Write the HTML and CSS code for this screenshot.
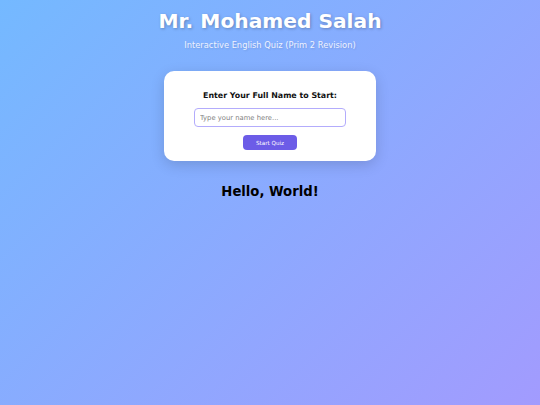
FILE: index.html
```html
<!DOCTYPE html>
<html>
<head>
<meta charset="utf-8">
<link rel="stylesheet" href="styles.css">
</head>
<body>
<header class="header">
  <h1 class="title">Mr. Mohamed Salah</h1>
  <p class="subtitle">Interactive English Quiz (Prim 2 Revision)</p>
</header>
<main class="main">
  <div class="card">
    <h3 class="card-title">Enter Your Full Name to Start:</h3>
    <input class="name-input" type="text" placeholder="Type your name here...">
    <button class="start-btn">Start Quiz</button>
  </div>
  <h2 class="hello">Hello, World!</h2>
</main>
</body>
</html>
```
FILE: styles.css
```css
html, body {
  margin: 0;
  padding: 0;
  height: 100%;
}
body {
  font-family: "DejaVu Sans", Verdana, sans-serif;
  background: linear-gradient(135deg, #74b9ff 0%, #a29bfe 100%);
  display: flex;
  flex-direction: column;
  align-items: center;
}
.header {
  text-align: center;
  padding-top: 9px;
}
.title {
  margin: 0;
  font-size: 20.2px;
  font-weight: bold;
  color: #fff;
  text-shadow: 1px 1px 3px rgba(0,0,0,0.25);
  line-height: 24px;
}
.subtitle {
  margin: 7px 0 0;
  font-size: 8.3px;
  color: #eef2ff;
  text-shadow: 1px 1px 2px rgba(0,0,0,0.12);
}
.main {
  display: flex;
  flex-direction: column;
  align-items: center;
}
.card {
  margin-top: 21px;
  width: 212px;
  height: 90px;
  box-sizing: border-box;
  background: #fff;
  border-radius: 10px;
  box-shadow: 0 4px 14px rgba(0,0,0,0.15);
  padding: 20px 0 0;
  display: flex;
  flex-direction: column;
  align-items: center;
}
.card-title {
  margin: 0;
  font-size: 7.9px;
  font-weight: bold;
  color: #111;
}
.name-input {
  margin-top: 8px;
  width: 152px;
  height: 19px;
  box-sizing: border-box;
  border: 1.5px solid #b3acfc;
  border-radius: 4px;
  padding: 0 5px;
  font-family: "DejaVu Sans", Verdana, sans-serif;
  font-size: 6.8px;
  color: #333;
  outline: none;
}
.name-input::placeholder { color: #808080; }
.start-btn {
  margin-top: 8px;
  width: 54px;
  height: 15px;
  border: none;
  border-radius: 4px;
  background: #6c5ce7;
  color: #fff;
  font-family: "DejaVu Sans", Verdana, sans-serif;
  font-size: 5.6px;
  padding: 0;
}
.hello {
  margin: 22.5px 0 0;
  font-size: 13.2px;
  font-weight: bold;
  color: #000;
}
```
